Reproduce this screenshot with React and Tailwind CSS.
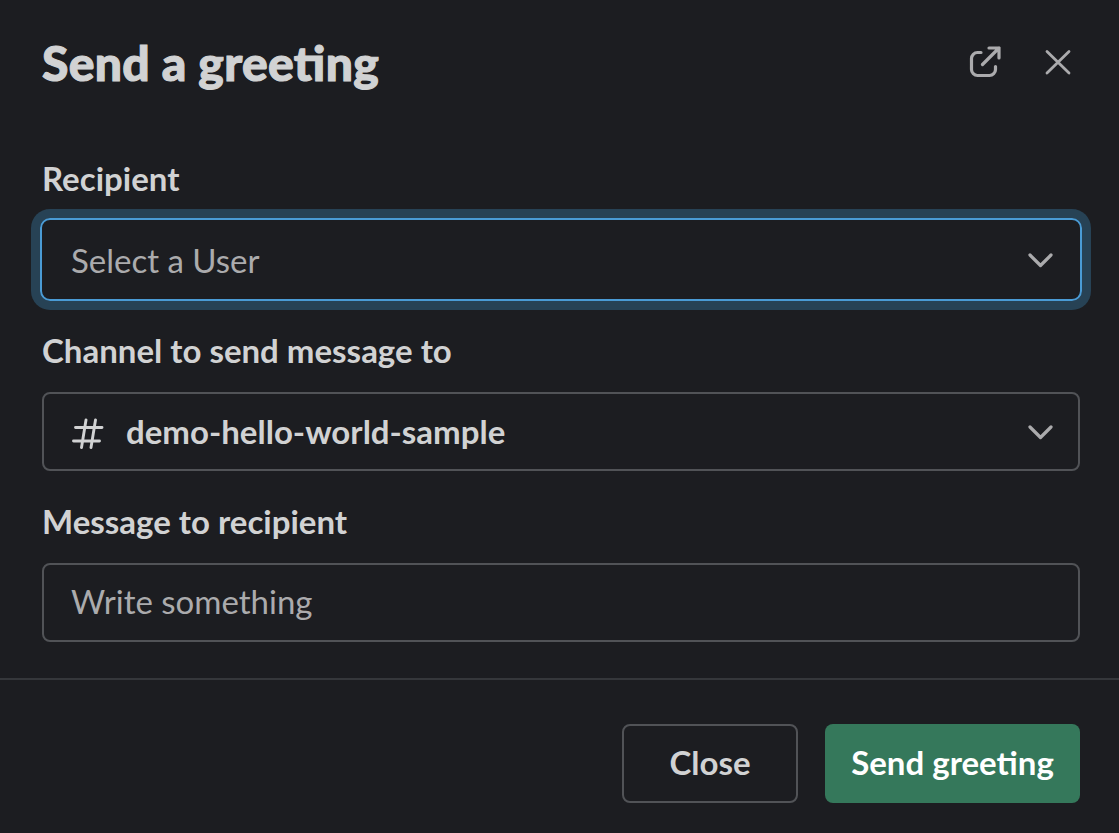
function Chevron() {
  return (
    <svg className="block h-[16px] w-[26px]" viewBox="0 0 26 16" fill="none" stroke="#ababad" strokeWidth="3.200" strokeLinecap="round" strokeLinejoin="round">
      <path d="M2 3 12.500 13.500 23 3" />
    </svg>
  );
}

export default function App() {
  return (
    <div className="flex h-[833px] w-[1119px] flex-col overflow-hidden bg-[#1c1d21] font-['Lato',sans-serif] text-[#d1d2d3]">
      <header className="flex h-[128px] items-start justify-between pl-[42px] pr-[48px]">
        <h1 className="mt-[33px] text-[48px] font-black leading-[60px] tracking-[0.320px] [-webkit-text-stroke:1.100px_#d1d2d3] [font-feature-settings:'liga'_1]">Send a greeting</h1>
        <div className="mt-[46px] flex items-center gap-[44px]">
          <svg className="block h-[32px] w-[32px]" viewBox="0 0 32 32" fill="none" stroke="#ababad" strokeWidth="3.200" strokeLinecap="round" strokeLinejoin="round">
            <path d="M12 6.500H8.500A6 6 0 0 0 2.500 12.500V23.500A6 6 0 0 0 8.500 29.500H20.500A6 6 0 0 0 26.500 23.500V20.500M20 2H30V12M30 2 13.500 18.500" />
          </svg>
          <svg className="block h-[26px] w-[26px]" viewBox="0 0 26 26" fill="none" stroke="#ababad" strokeWidth="2.800" strokeLinecap="round">
            <path d="M2 2.500 24 24M24 2.500 2 24" />
          </svg>
        </div>
      </header>
      <main className="flex h-[550px] flex-col pl-[42px] pr-[39px] pt-[28px] text-[33px]">
        <label className="h-[62px] font-bold leading-[44px]">Recipient</label>
        <div className="-mx-[2px] flex h-[83px] items-center justify-between rounded-[10px] border-2 border-[#4a9bd5] pl-[29px] pr-[26px] text-[#ababad] shadow-[0_0_0_9px_#274255]">
          <span className="pt-[2px]">Select a User</span>
          <Chevron />
        </div>
        <label className="mt-[27px] h-[64px] font-bold leading-[44px]">Channel to send message to</label>
        <div className="flex h-[79px] items-center rounded-[8px] border-2 border-[#515357] pl-[27px] pr-[24px] font-bold">
          <svg className="mr-[21px] block h-[34px] w-[34px]" viewBox="0 0 34 34" fill="none" stroke="#d1d2d3" strokeWidth="2.900" strokeLinecap="round">
            <path d="M4.500 12.500H31M2.500 26H28.500M15 5 10.500 32.500M24.500 5 20 32.500" />
          </svg>
          <span className="flex-1">demo-hello-world-sample</span>
          <Chevron />
        </div>
        <label className="mt-[28px] h-[64px] font-bold leading-[44px]">Message to recipient</label>
        <div className="flex h-[79px] items-center rounded-[8px] border-2 border-[#515357] pb-[2px] pl-[27px] text-[#ababad]">Write something</div>
      </main>
      <footer className="flex h-[155px] items-start justify-end gap-[27px] border-t-2 border-[#35373b] pr-[39px] pt-[44px] text-[33px] font-bold">
        <button className="h-[79px] w-[176px] rounded-[8px] border-2 border-[#515357] pb-[2px]">Close</button>
        <button className="h-[79px] w-[255px] rounded-[8px] bg-[#35785b] pb-[2px] text-white">Send greeting</button>
      </footer>
    </div>
  );
}
